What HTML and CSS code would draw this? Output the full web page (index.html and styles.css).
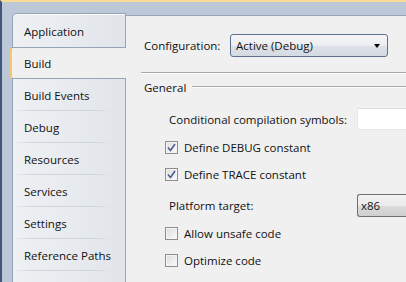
FILE: index.html
```html
<!DOCTYPE html>
<html lang="en">
<head>
  <meta charset="UTF-8" />
  <title>Build properties</title>
  <link rel="stylesheet" href="styles.css">
</head>
<body>
  <div class="window">
    <!-- Tabs on the left -->
    <nav class="tabs">
      <div class="tab first">Application</div>
      <div class="tab active">Build</div>
      <div class="tab">Build Events</div>
      <div class="tab">Debug</div>
      <div class="tab">Resources</div>
      <div class="tab">Services</div>
      <div class="tab">Settings</div>
      <div class="tab">Reference Paths</div>
      <div class="tab"></div>
    </nav>

    <!-- Build page -->
    <main class="page">
      <div class="row config-row">
        <span class="config-label">Configuration:</span>
        <div class="combo hot">
          <span>Active (Debug)</span>
          <span class="arrow"></span>
        </div>
      </div>

      <div class="rule"></div>

      <div class="group-title">
        <span>General</span>
        <span class="group-line"></span>
      </div>

      <div class="row field symbols">
        <span class="field-label">Conditional compilation symbols:</span>
        <div class="textbox"></div>
      </div>

      <label class="check check-debug">
        <span class="box checked">
          <svg width="9" height="9" viewBox="0 0 9 9"><path d="M1 4.5 L3.5 7.5 L8 1" fill="none" stroke="#4b5f94" stroke-width="1.6"/></svg>
        </span>
        Define DEBUG constant
      </label>

      <label class="check check-trace">
        <span class="box checked">
          <svg width="9" height="9" viewBox="0 0 9 9"><path d="M1 4.5 L3.5 7.5 L8 1" fill="none" stroke="#4b5f94" stroke-width="1.6"/></svg>
        </span>
        Define TRACE constant
      </label>

      <div class="row field platform">
        <span class="field-label">Platform target:</span>
        <div class="combo plain"><span>x86</span></div>
      </div>

      <label class="check check-unsafe">
        <span class="box"></span>
        Allow unsafe code
      </label>

      <label class="check check-optimize">
        <span class="box"></span>
        Optimize code
      </label>
    </main>
  </div>
</body>
</html>
```

FILE: styles.css
```css
body {
  margin: 0;
  height: 280px;
  overflow: hidden;
  font-family: "Segoe UI", "Open Sans", sans-serif;
  font-size: 11.5px;
  color: #111;
  background: #bcc7d8;
  border-top: 2px solid #f7dc97;
  border-left: 2px solid #44557a;
}

.window {
  display: flex;
  height: 280px;
  overflow: hidden;
}

/* tabs */

.tabs {
  width: 116px;
  margin: 11px 0 0 8px;
  display: flex;
  flex-direction: column;
  overflow: hidden;
}

.tab {
  position: relative;
  height: 32px;
  flex-shrink: 0;
  display: flex;
  align-items: center;
  padding-left: 11px;
  margin-left: 2px;
  background: linear-gradient(to right, #eef0f3, #e1e5eb);
  border-left: 1px solid #97a3b7;
  border-right: 1px solid #97a3b7;
  box-sizing: border-box;
}

.tab::after {
  content: "";
  position: absolute;
  left: 4px;
  right: 12px;
  bottom: 0;
  height: 1px;
  background: linear-gradient(to right, #e4e8ee, #cdd4df 20%, #cdd4df 80%, #e2e6ec);
}

.tab.first {
  height: 34px;
  padding-top: 2px;
  border-top: 1px solid #97a3b7;
  border-top-left-radius: 5px;
  box-shadow: inset 0 1px 0 #fbfbfc;
}

.tab.first::after,
.tab.active::after {
  display: none;
}

.tab.active {
  margin-left: 0;
  background: #f0f0f0;
  border-top: 1px solid #97a3b7;
  border-bottom: 1px solid #97a3b7;
  border-left: 2px solid #f3c76a;
  border-right: none;
  border-radius: 3px 0 0 3px;
  padding-left: 12px;
}

/* page */

.page {
  flex: 1;
  margin-top: 13px;
  background: #f0f0f0;
  border-top: 1px solid #97a3b7;
  padding-left: 18px;
  overflow: hidden;
  display: flex;
  flex-direction: column;
}

.row {
  display: flex;
  align-items: center;
  white-space: nowrap;
}

.config-row {
  margin-top: 18px;
  height: 23px;
}

.config-label {
  width: 86px;
}

.combo {
  height: 23px;
  box-sizing: border-box;
  border-radius: 3px;
  display: flex;
  align-items: center;
  padding-left: 5px;
  flex-shrink: 0;
}

.combo.hot {
  width: 158px;
  border: 1px solid #5d718f;
  background: linear-gradient(#f5f6f8, #ebedf0 50%, #dde2e8 51%, #d4dae2);
  justify-content: space-between;
  padding-right: 7px;
}

.combo.plain {
  width: 80px;
  border: 1px solid #707070;
  border-right: none;
  border-radius: 3px 0 0 3px;
  background: linear-gradient(#f2f2f2, #ebebeb 50%, #dddddd 51%, #cfcfcf);
  padding-left: 3px;
}

.arrow {
  width: 0;
  height: 0;
  border-left: 3.5px solid transparent;
  border-right: 3.5px solid transparent;
  border-top: 4px solid #000;
}

.rule {
  margin: 15px 0 0 -3px;
  height: 0;
  border-top: 1px solid #a9a9a9;
  border-bottom: 1px solid #fdfdfd;
}

.group-title {
  margin-top: 5px;
  height: 16px;
  display: flex;
  align-items: center;
}

.group-line {
  flex: 1;
  margin-left: 6px;
  border-top: 1px solid #a9a9a9;
  border-bottom: 1px solid #fdfdfd;
}

.field {
  padding-left: 25px;
}

.field-label {
  width: 188px;
  flex-shrink: 0;
}

.symbols {
  margin-top: 13px;
  height: 22px;
}

.textbox {
  width: 80px;
  height: 22px;
  flex-shrink: 0;
  box-sizing: border-box;
  background: #fff;
  border: 1px solid #e3e9ef;
  border-top-color: #dcdfe3;
  border-right: none;
}

.platform {
  margin-top: 12px;
  height: 23px;
}

.check {
  display: flex;
  align-items: center;
  height: 16px;
  padding-left: 21px;
  white-space: nowrap;
}

.box {
  width: 13px;
  height: 13px;
  box-sizing: border-box;
  margin-right: 6px;
  border: 1px solid #8e8f8f;
  background: linear-gradient(135deg, #dcdcdc, #fbfbfb);
  box-shadow: inset 0 0 0 1px #f4f4f4;
  display: flex;
  align-items: center;
  justify-content: center;
}

.check-debug {
  margin-top: 9px;
}

.check-trace {
  margin-top: 11px;
}

.check-unsafe {
  margin-top: 8px;
}

.check-optimize {
  margin-top: 11px;
}
```
